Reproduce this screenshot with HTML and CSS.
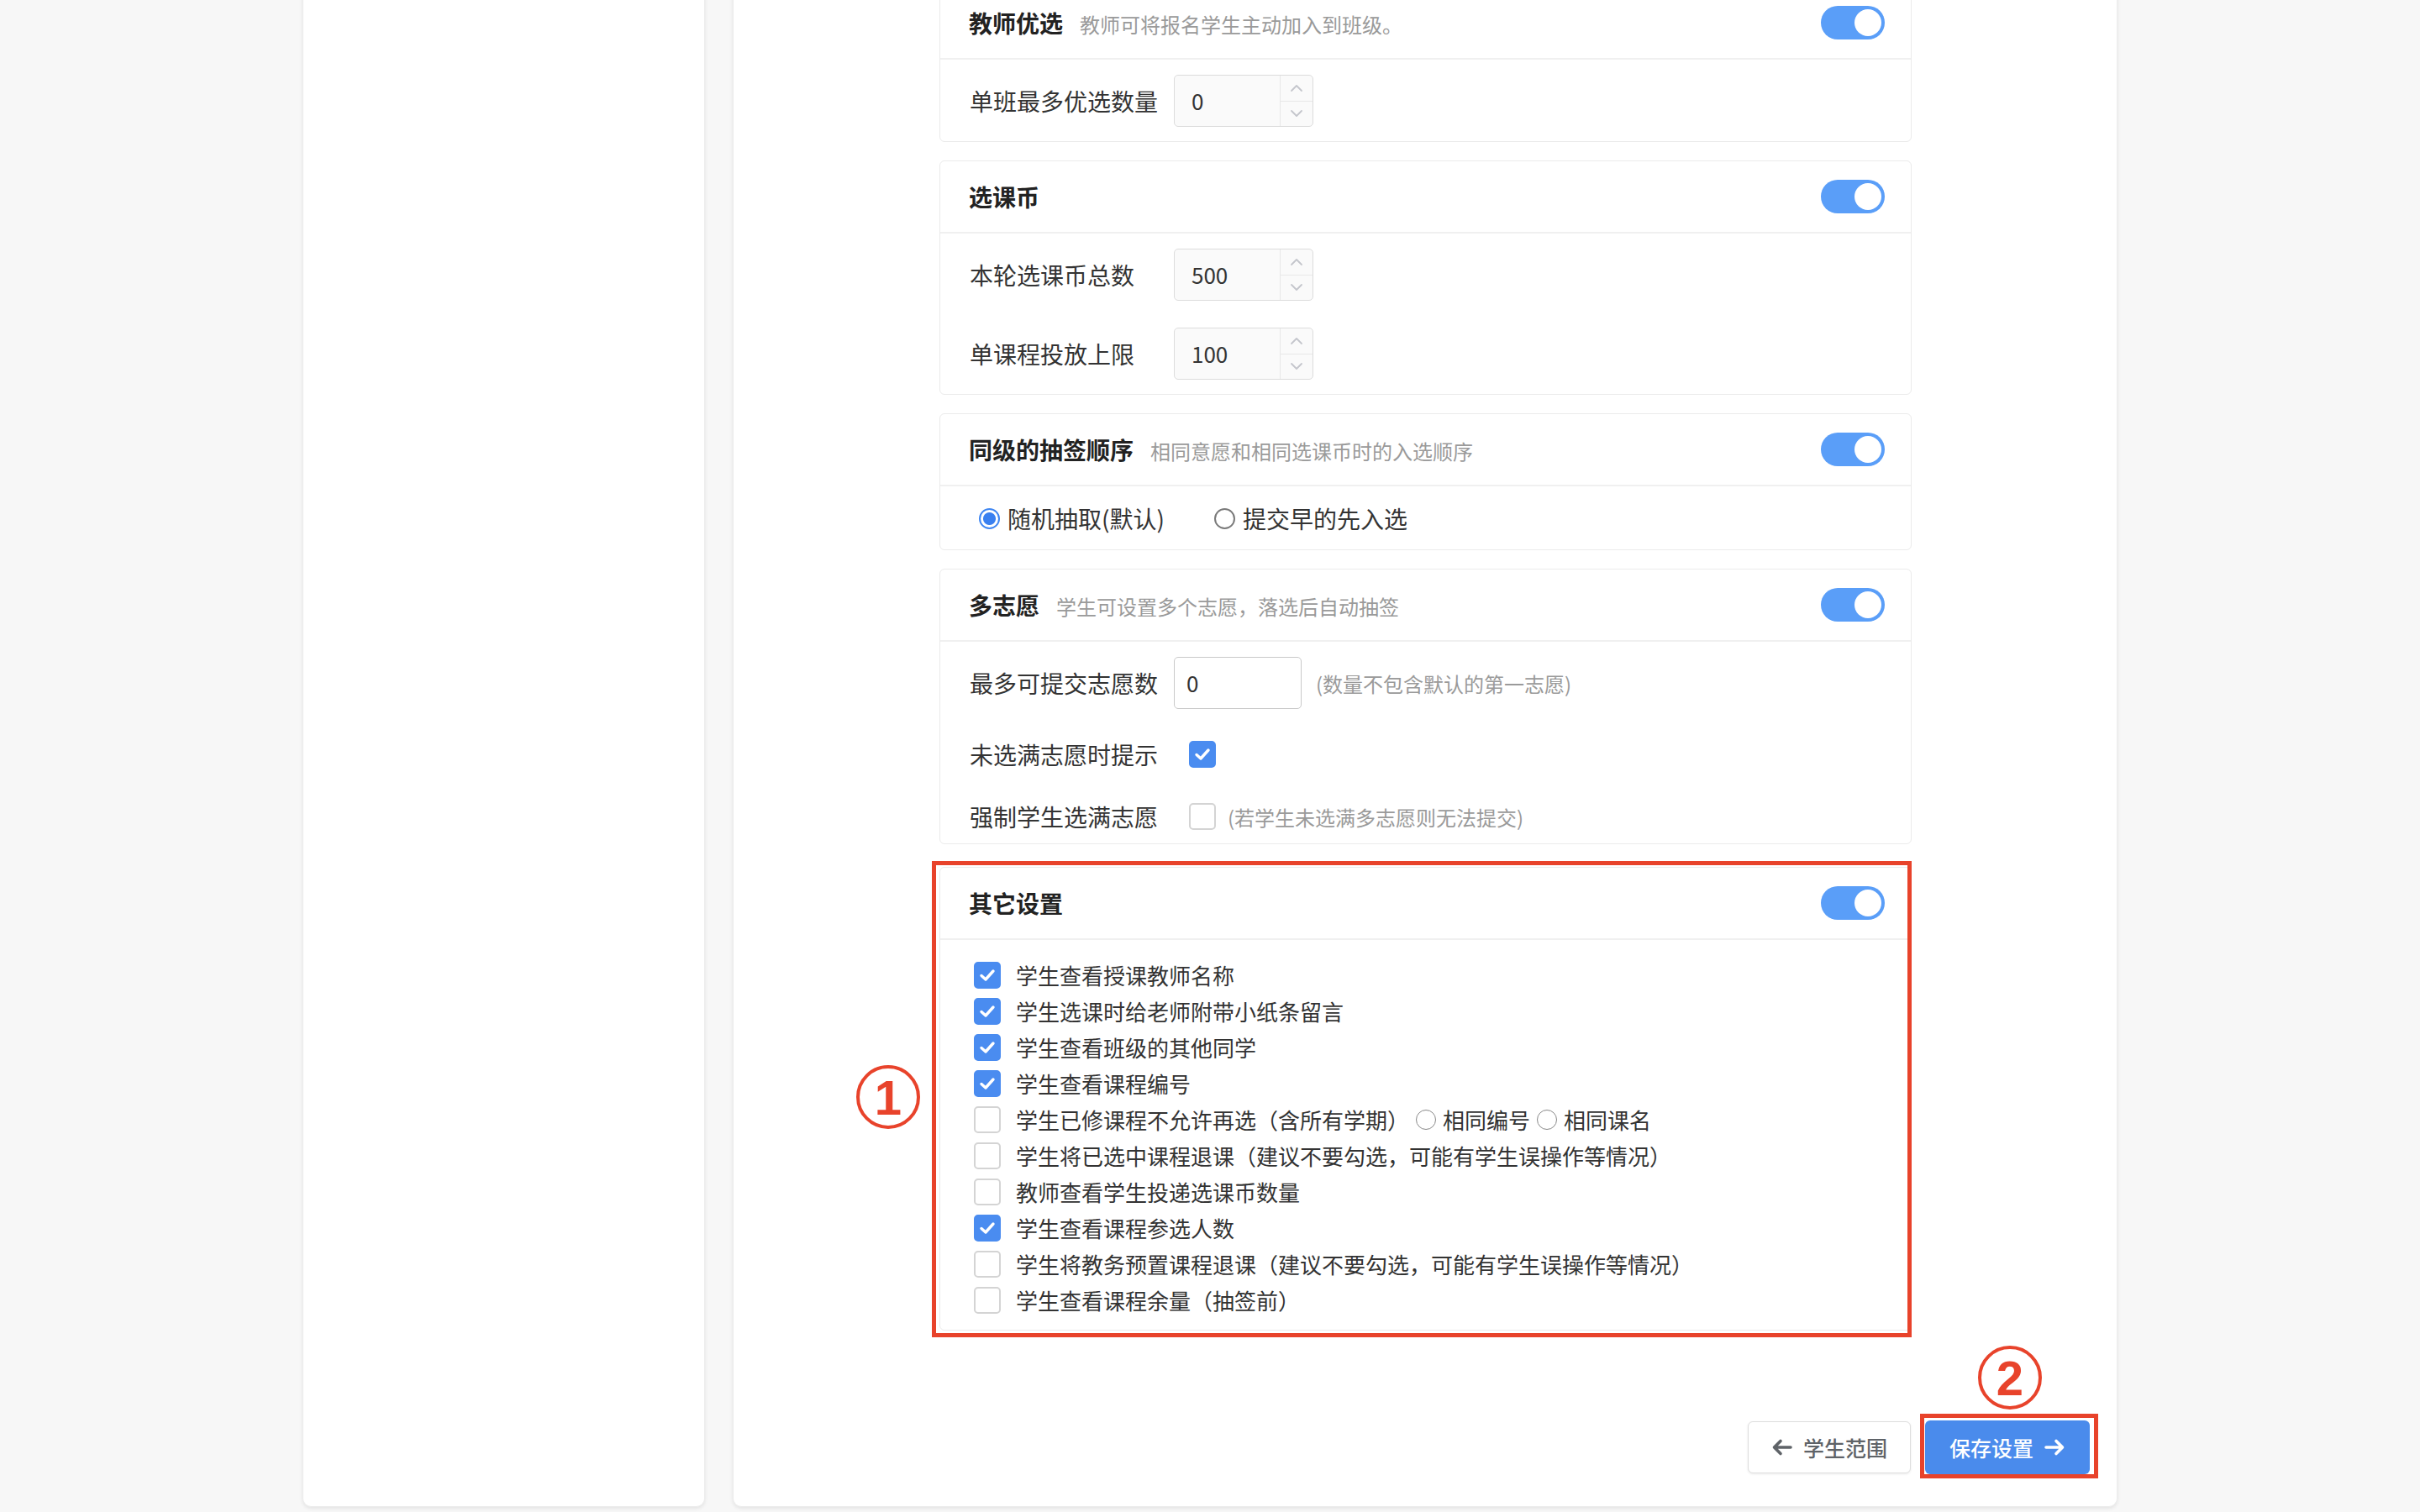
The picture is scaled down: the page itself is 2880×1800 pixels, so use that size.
FILE: index.html
```html
<!DOCTYPE html>
<html lang="zh-CN">
<head>
  <meta charset="UTF-8" />
  <meta name="viewport" content="width=device-width,initial-scale=1.0"/>
  <title>选课设置</title>
  <link rel="stylesheet" href="styles.css">
</head>
<body>

<div class="page">
  <aside class="side"></aside>

  <main class="main">
    <div class="cards">

      <!-- 教师优选 -->
      <section class="card">
        <div class="card-head">
          <div><span class="title">教师优选</span><span class="desc">教师可将报名学生主动加入到班级。</span></div>
          <span class="switch"><span class="knob"></span></span>
        </div>
        <div class="card-body">
          <div class="form-row">
            <span class="label">单班最多优选数量</span>
            <div class="num-input">
              <span class="num-val">0</span>
              <span class="spin">
                <span class="spin-btn"><svg width="16" height="10" viewBox="0 0 16 10"><path d="M2 8 L8 2 L14 8" fill="none" stroke="#c4c6cc" stroke-width="1.8" stroke-linecap="round" stroke-linejoin="round"/></svg></span>
                <span class="spin-btn"><svg width="16" height="10" viewBox="0 0 16 10"><path d="M2 2 L8 8 L14 2" fill="none" stroke="#c4c6cc" stroke-width="1.8" stroke-linecap="round" stroke-linejoin="round"/></svg></span>
              </span>
            </div>
          </div>
        </div>
      </section>

      <!-- 选课币 -->
      <section class="card">
        <div class="card-head">
          <div><span class="title">选课币</span></div>
          <span class="switch"><span class="knob"></span></span>
        </div>
        <div class="card-body gap-rows">
          <div class="form-row">
            <span class="label">本轮选课币总数</span>
            <div class="num-input">
              <span class="num-val">500</span>
              <span class="spin">
                <span class="spin-btn"><svg width="16" height="10" viewBox="0 0 16 10"><path d="M2 8 L8 2 L14 8" fill="none" stroke="#c4c6cc" stroke-width="1.8" stroke-linecap="round" stroke-linejoin="round"/></svg></span>
                <span class="spin-btn"><svg width="16" height="10" viewBox="0 0 16 10"><path d="M2 2 L8 8 L14 2" fill="none" stroke="#c4c6cc" stroke-width="1.8" stroke-linecap="round" stroke-linejoin="round"/></svg></span>
              </span>
            </div>
          </div>
          <div class="form-row">
            <span class="label">单课程投放上限</span>
            <div class="num-input">
              <span class="num-val">100</span>
              <span class="spin">
                <span class="spin-btn"><svg width="16" height="10" viewBox="0 0 16 10"><path d="M2 8 L8 2 L14 8" fill="none" stroke="#c4c6cc" stroke-width="1.8" stroke-linecap="round" stroke-linejoin="round"/></svg></span>
                <span class="spin-btn"><svg width="16" height="10" viewBox="0 0 16 10"><path d="M2 2 L8 8 L14 2" fill="none" stroke="#c4c6cc" stroke-width="1.8" stroke-linecap="round" stroke-linejoin="round"/></svg></span>
              </span>
            </div>
          </div>
        </div>
      </section>

      <!-- 同级的抽签顺序 -->
      <section class="card">
        <div class="card-head">
          <div><span class="title">同级的抽签顺序</span><span class="desc">相同意愿和相同选课币时的入选顺序</span></div>
          <span class="switch"><span class="knob"></span></span>
        </div>
        <div class="card-body">
          <div class="radio-row">
            <span class="radio-item"><span class="radio on"></span>随机抽取(默认)</span>
            <span class="radio-item"><span class="radio"></span>提交早的先入选</span>
          </div>
        </div>
      </section>

      <!-- 多志愿 -->
      <section class="card">
        <div class="card-head">
          <div><span class="title">多志愿</span><span class="desc">学生可设置多个志愿，落选后自动抽签</span></div>
          <span class="switch"><span class="knob"></span></span>
        </div>
        <div class="card-body multi">
          <div class="form-row">
            <span class="label">最多可提交志愿数</span>
            <div class="text-input">0</div>
            <span class="hint">(数量不包含默认的第一志愿)</span>
          </div>
          <div class="form-row">
            <span class="label">未选满志愿时提示</span>
            <span class="cb on solo"><svg width="20" height="16" viewBox="0 0 20 16"><path d="M3 8.5 L8 13 L17 3" fill="none" stroke="#fff" stroke-width="3.4" stroke-linecap="round" stroke-linejoin="round"/></svg></span>
          </div>
          <div class="form-row">
            <span class="label">强制学生选满志愿</span>
            <span class="cb solo"></span>
            <span class="hint tight">(若学生未选满多志愿则无法提交)</span>
          </div>
        </div>
      </section>

      <!-- 其它设置 -->
      <div class="card-wrap">
        <section class="card">
          <div class="card-head">
            <div><span class="title">其它设置</span></div>
            <span class="switch"><span class="knob"></span></span>
          </div>
          <div class="card-body checks">
            <div class="check-item"><span class="cb on"><svg width="20" height="16" viewBox="0 0 20 16"><path d="M3 8.5 L8 13 L17 3" fill="none" stroke="#fff" stroke-width="3.4" stroke-linecap="round" stroke-linejoin="round"/></svg></span>学生查看授课教师名称</div>
            <div class="check-item"><span class="cb on"><svg width="20" height="16" viewBox="0 0 20 16"><path d="M3 8.5 L8 13 L17 3" fill="none" stroke="#fff" stroke-width="3.4" stroke-linecap="round" stroke-linejoin="round"/></svg></span>学生选课时给老师附带小纸条留言</div>
            <div class="check-item"><span class="cb on"><svg width="20" height="16" viewBox="0 0 20 16"><path d="M3 8.5 L8 13 L17 3" fill="none" stroke="#fff" stroke-width="3.4" stroke-linecap="round" stroke-linejoin="round"/></svg></span>学生查看班级的其他同学</div>
            <div class="check-item"><span class="cb on"><svg width="20" height="16" viewBox="0 0 20 16"><path d="M3 8.5 L8 13 L17 3" fill="none" stroke="#fff" stroke-width="3.4" stroke-linecap="round" stroke-linejoin="round"/></svg></span>学生查看课程编号</div>
            <div class="check-item"><span class="cb"></span>学生已修课程不允许再选（含所有学期）
              <span class="radio small"></span>相同编号
              <span class="radio small"></span>相同课名
            </div>
            <div class="check-item"><span class="cb"></span>学生将已选中课程退课（建议不要勾选，可能有学生误操作等情况）</div>
            <div class="check-item"><span class="cb"></span>教师查看学生投递选课币数量</div>
            <div class="check-item"><span class="cb on"><svg width="20" height="16" viewBox="0 0 20 16"><path d="M3 8.5 L8 13 L17 3" fill="none" stroke="#fff" stroke-width="3.4" stroke-linecap="round" stroke-linejoin="round"/></svg></span>学生查看课程参选人数</div>
            <div class="check-item"><span class="cb"></span>学生将教务预置课程退课（建议不要勾选，可能有学生误操作等情况）</div>
            <div class="check-item"><span class="cb"></span>学生查看课程余量（抽签前）</div>
          </div>
        </section>
        <div class="mark-box box-1"></div>
        <div class="mark-num num-1">1</div>
      </div>
    </div>

    <div class="actions">
      <button class="btn btn-back">
        <svg width="26" height="22" viewBox="0 0 26 22"><path d="M23 11 H4 M11 3.5 L3.5 11 L11 18.5" fill="none" stroke="#5f6368" stroke-width="3.6" stroke-linecap="round" stroke-linejoin="round"/></svg>
        学生范围
      </button>
      <div class="save-wrap">
        <button class="btn btn-save">
          保存设置
          <svg width="26" height="22" viewBox="0 0 26 22"><path d="M3 11 H22 M15 3.5 L22.5 11 L15 18.5" fill="none" stroke="#fff" stroke-width="3.6" stroke-linecap="round" stroke-linejoin="round"/></svg>
        </button>
        <div class="mark-box box-2"></div>
        <div class="mark-num num-2">2</div>
      </div>
    </div>
  </main>
</div>

</body>
</html>
```

FILE: styles.css
```css
:root {
  --blue: #4a8cf0;
  --switch: #5a9ef8;
  --mark: #e8432b;
  --line: #ebebeb;
  --text: #333;
  --muted: #9a9a9a;
}

html, body {
  margin: 0;
  padding: 0;
  height: 100%;
  overflow: hidden;
  background: #f7f7f7;
  font-family: "Noto Sans CJK SC", "Noto Sans", sans-serif;
  color: var(--text);
}

/* page is scrolled down, so the panels start above the top edge */
.page {
  display: flex;
  gap: 33px;
  padding-left: 360px;
  margin-top: -60px;
}

.side {
  width: 479px;
  background: #fff;
  border: 1px solid #ececec;
  border-top: none;
  border-radius: 0 0 10px 10px;
  box-shadow: 0 2px 4px rgba(0, 0, 0, 0.08);
  box-sizing: border-box;
}

.main {
  width: 1648px;
  box-sizing: border-box;
  padding: 44px 32px 38px 245px;
  background: #fff;
  border: 1px solid #ececec;
  border-top: none;
  border-radius: 0 0 10px 10px;
  box-shadow: 0 2px 4px rgba(0, 0, 0, 0.08);
}

.cards {
  display: flex;
  flex-direction: column;
  gap: 22px;
  width: 1157px;
}

.card {
  background: #fff;
  border: 1px solid var(--line);
  border-radius: 6px;
}

.card-head {
  height: 84px;
  border-bottom: 2px solid #f0f0f0;
  display: flex;
  align-items: center;
  justify-content: space-between;
  padding: 0 31px 0 34px;
}

.title {
  font-size: 28px;
  font-weight: 600;
  color: #222;
}

.desc {
  font-size: 24px;
  color: var(--muted);
  margin-left: 20px;
}

.switch {
  width: 76px;
  height: 40px;
  padding: 4px;
  box-sizing: border-box;
  border-radius: 20px;
  background: var(--switch);
  display: flex;
  justify-content: flex-end;
}

.knob {
  width: 32px;
  height: 32px;
  border-radius: 50%;
  background: #fff;
}

.card-body {
  padding: 18px 35px 17px;
  display: flex;
  flex-direction: column;
}

.gap-rows { gap: 32px; }

.form-row {
  display: flex;
  align-items: center;
  min-height: 40px;
}

.label {
  width: 243px;
  flex: none;
  font-size: 28px;
  line-height: 40px;
  color: var(--text);
}

.num-input {
  width: 166px;
  height: 62px;
  box-sizing: border-box;
  border: 1px solid #dcdcdc;
  border-radius: 5px;
  background: #fafafa;
  display: flex;
}

.num-val {
  flex: 1;
  padding-left: 20px;
  font-size: 26px;
  line-height: 60px;
  color: #333;
}

.spin {
  width: 38px;
  border-left: 1px solid #e8e8e8;
  display: flex;
  flex-direction: column;
}

.spin-btn {
  flex: 1;
  display: flex;
  align-items: center;
  justify-content: center;
}

.spin-btn + .spin-btn { border-top: 1px solid #e8e8e8; }

/* 多志愿 */
.multi {
  padding-bottom: 12px;
  gap: 34px;
}

.text-input {
  width: 152px;
  height: 62px;
  box-sizing: border-box;
  border: 1px solid #c9c9c9;
  border-radius: 5px;
  padding-left: 14px;
  font-size: 26px;
  line-height: 60px;
}

.hint {
  font-size: 24px;
  color: var(--muted);
  margin-left: 17px;
}

.hint.tight { margin-left: 14px; }

.cb {
  width: 32px;
  height: 32px;
  flex: none;
  box-sizing: border-box;
  border: 2px solid #d4d4d4;
  border-radius: 5px;
  background: #fff;
  display: flex;
  align-items: center;
  justify-content: center;
}

.cb.on {
  background: var(--blue);
  border-color: var(--blue);
}

.cb.solo { margin-left: 18px; }

/* radios */
.radio-row {
  display: flex;
  align-items: center;
  height: 40px;
  padding-left: 11px;
  gap: 59px;
}

.radio-item {
  display: flex;
  align-items: center;
  gap: 9px;
  font-size: 28px;
  color: var(--text);
}

.radio {
  width: 25px;
  height: 25px;
  flex: none;
  box-sizing: border-box;
  border: 2px solid #7a7a7a;
  border-radius: 50%;
  background: #fff;
}

.radio.on {
  border-color: #3f86f2;
  background: radial-gradient(circle, #3a80f0 0 7px, #fff 8px);
}

.radio.small {
  width: 24px;
  height: 24px;
  border-width: 1.5px;
  border-color: #888;
  margin: 0 8px 0 8px;
}

/* 其它设置 */
.card-wrap {
  position: relative;
  margin-top: 5px;
}

.checks {
  padding: 20px 35px 14px 40px;
}

.check-item {
  height: 43px;
  display: flex;
  align-items: center;
  font-size: 26px;
  color: var(--text);
}

.check-item .cb { margin-right: 18px; }

/* annotations */
.mark-box {
  position: absolute;
  border: 5px solid var(--mark);
  pointer-events: none;
}

.box-1 { top: -7px; bottom: -8px; left: -9px; right: 0; }
.box-2 { top: -8px; bottom: -5px; left: -6px; right: -10px; }

.mark-num {
  position: absolute;
  width: 76px;
  height: 76px;
  box-sizing: border-box;
  border: 4px solid var(--mark);
  border-radius: 50%;
  display: flex;
  align-items: center;
  justify-content: center;
  font-family: "Liberation Sans", Arial, sans-serif;
  font-weight: 700;
  font-size: 58px;
  color: var(--mark);
}

.num-1 { left: -99px; top: 236px; }
.num-2 { left: 63px; top: -89px; }

/* bottom buttons */
.actions {
  margin-top: 107px;
  display: flex;
  justify-content: flex-end;
  align-items: center;
  gap: 17px;
}

.save-wrap { position: relative; }

.btn {
  display: flex;
  align-items: center;
  justify-content: center;
  gap: 12px;
  font-family: inherit;
  font-size: 25px;
  font-weight: 500;
  border-radius: 6px;
  cursor: pointer;
}

.btn-back {
  width: 194px;
  height: 62px;
  background: #fff;
  color: #5f6368;
  border: 1px solid #dedede;
  box-shadow: 0 1px 3px rgba(0, 0, 0, 0.08);
}

.btn-save {
  width: 196px;
  height: 64px;
  background: #4a8bec;
  color: #fff;
  border: none;
}
```
